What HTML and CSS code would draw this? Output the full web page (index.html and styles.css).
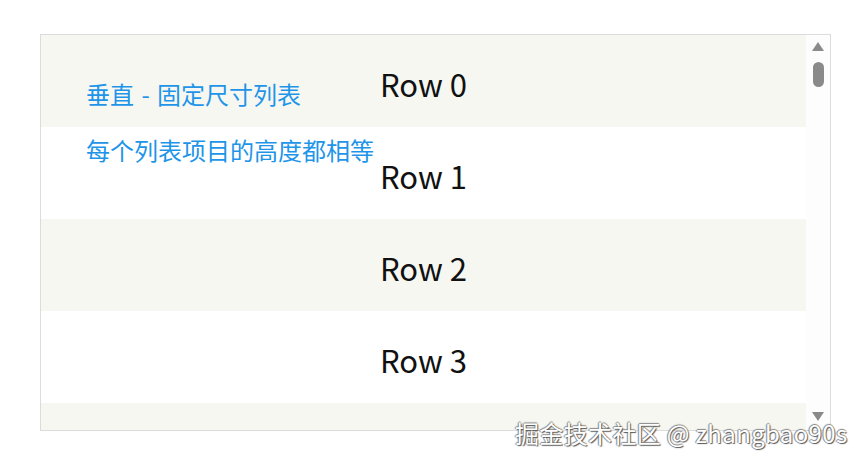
FILE: index.html
```html
<!DOCTYPE html>
<html lang="zh-CN">
<head>
  <meta charset="UTF-8" />
  <title>垂直 - 固定尺寸列表</title>
  <link rel="stylesheet" href="styles.css">
</head>
<body>
  <div class="demo">
    <div class="intro">
      <h1>垂直 - 固定尺寸列表</h1>
      <p>每个列表项目的高度都相等</p>
    </div>

    <div class="list">
      <div class="rows">
        <div class="row odd">Row 0</div>
        <div class="row">Row 1</div>
        <div class="row odd">Row 2</div>
        <div class="row">Row 3</div>
        <div class="row odd"></div>
      </div>
      <div class="scrollbar">
        <span class="arrow up"></span>
        <span class="thumb"></span>
        <span class="track"></span>
        <span class="arrow down"></span>
      </div>
    </div>
  </div>

  <div class="mark">掘金技术社区 @ zhangbao90s</div>
</body>
</html>
```

FILE: styles.css
```css
body {
  margin: 0;
  font-family: 'Noto Sans CJK SC', 'Noto Sans', sans-serif;
  background: #fff;
  color: #111;
}

.demo {
  position: relative;
  padding: 34px 0 0 40px;
}

.intro {
  position: absolute;
  left: 86px;
  top: 77px;
  z-index: 2;
  color: #1e95e8;
}

.intro h1 {
  font-size: 24px;
  font-weight: normal;
  margin: 0;
  line-height: 34px;
  word-spacing: 2px;
}

.intro p {
  font-size: 24px;
  margin: 22px 0 0;
  line-height: 34px;
}

.list {
  display: flex;
  width: 789px;
  height: 395px;
  border: 1px solid #dcdcdc;
  overflow: hidden;
}

.rows {
  flex: 1;
}

.row {
  height: 92px;
  display: flex;
  align-items: center;
  justify-content: center;
  font-size: 31px;
  line-height: 1;
  padding-top: 4px;
  box-sizing: border-box;
}

.row.odd {
  background: #f7f7f1;
}

.scrollbar {
  width: 24px;
  display: flex;
  flex-direction: column;
  align-items: center;
  background: #fdfdfd;
}

.arrow {
  width: 0;
  height: 0;
  border-left: 6px solid transparent;
  border-right: 6px solid transparent;
}

.arrow.up {
  margin-top: 7px;
  border-bottom: 9px solid #8a8a8a;
}

.arrow.down {
  margin-bottom: 9px;
  border-top: 9px solid #8a8a8a;
}

.thumb {
  width: 11px;
  height: 25px;
  margin-top: 11px;
  border-radius: 6px;
  background: #8a8a8a;
}

.track {
  flex: 1;
}

.mark {
  position: absolute;
  left: 515px;
  top: 416px;
  font-size: 24px;
  line-height: 34px;
  letter-spacing: 0.35px;
  color: #fff;
  text-shadow: 1px 1px 1px #555, -1px 0 1px #888, 0 -1px 1px #888;
}
```
